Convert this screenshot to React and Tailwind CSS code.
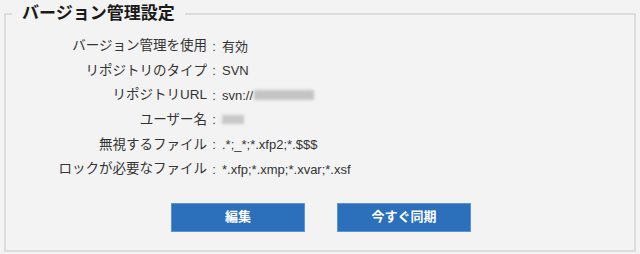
/*
Version control settings panel (fieldset with summary rows + action buttons)
*/

import React from "react";

const rows = [
  { label: "バージョン管理を使用", value: "有効" },
  { label: "リポジトリのタイプ", value: "SVN" },
  { label: "リポジトリURL", value: "url" },
  { label: "ユーザー名", value: "user" },
  { label: "無視するファイル", value: ".*;_*;*.xfp2;*.$$$" },
  { label: "ロックが必要なファイル", value: "*.xfp;*.xmp;*.xvar;*.xsf" },
];

function Value({ value }) {
  // masked values are shown as blurred blocks
  if (value === "url") {
    return (
      <span className="flex items-center">
        svn://
        <span className="ml-[1px] inline-block h-[10px] w-[60px] bg-[#c4c4c4] blur-[1.5px]" />
      </span>
    );
  }
  if (value === "user") {
    return <span className="inline-block h-[9px] w-[22px] bg-[#c8c8c8] blur-[1.5px]" />;
  }
  return <span>{value}</span>;
}

export default function App() {
  return (
    <div
      className="h-[254px] w-[640px] bg-[#f3f3f3] px-[4px] text-[#333]"
      style={{ fontFamily: '"Liberation Sans", "Noto Sans CJK JP", sans-serif' }}
    >
      <fieldset className="h-[252px] border-2 border-[#dcdcdc]">
        <legend className="ml-[6px] px-[10px] text-[17px] font-bold leading-[28px] text-[#1a1a1a]">
          バージョン管理設定
        </legend>

        {/* SETTINGS ROWS */}
        <div className="pt-[6px] text-[13px]">
          {rows.map((row) => (
            <div key={row.label} className="flex h-[24.6px] items-center">
              <div className="w-[201px] text-right text-[13.5px]">{row.label}</div>
              <div className="w-[14px] text-center">:</div>
              <div className="pl-[1px]">
                <Value value={row.value} />
              </div>
            </div>
          ))}
        </div>

        {/* ACTION BUTTONS */}
        <div className="mt-[21px] flex justify-center gap-[32px] pl-[2px]">
          <button className="h-[29px] w-[134px] border border-[#5b94d2] bg-[#2c6fbb] text-[13px] font-bold text-white">
            編集
          </button>
          <button className="h-[29px] w-[134px] border border-[#5b94d2] bg-[#2c6fbb] text-[13px] font-bold text-white">
            今すぐ同期
          </button>
        </div>
      </fieldset>
    </div>
  );
}
